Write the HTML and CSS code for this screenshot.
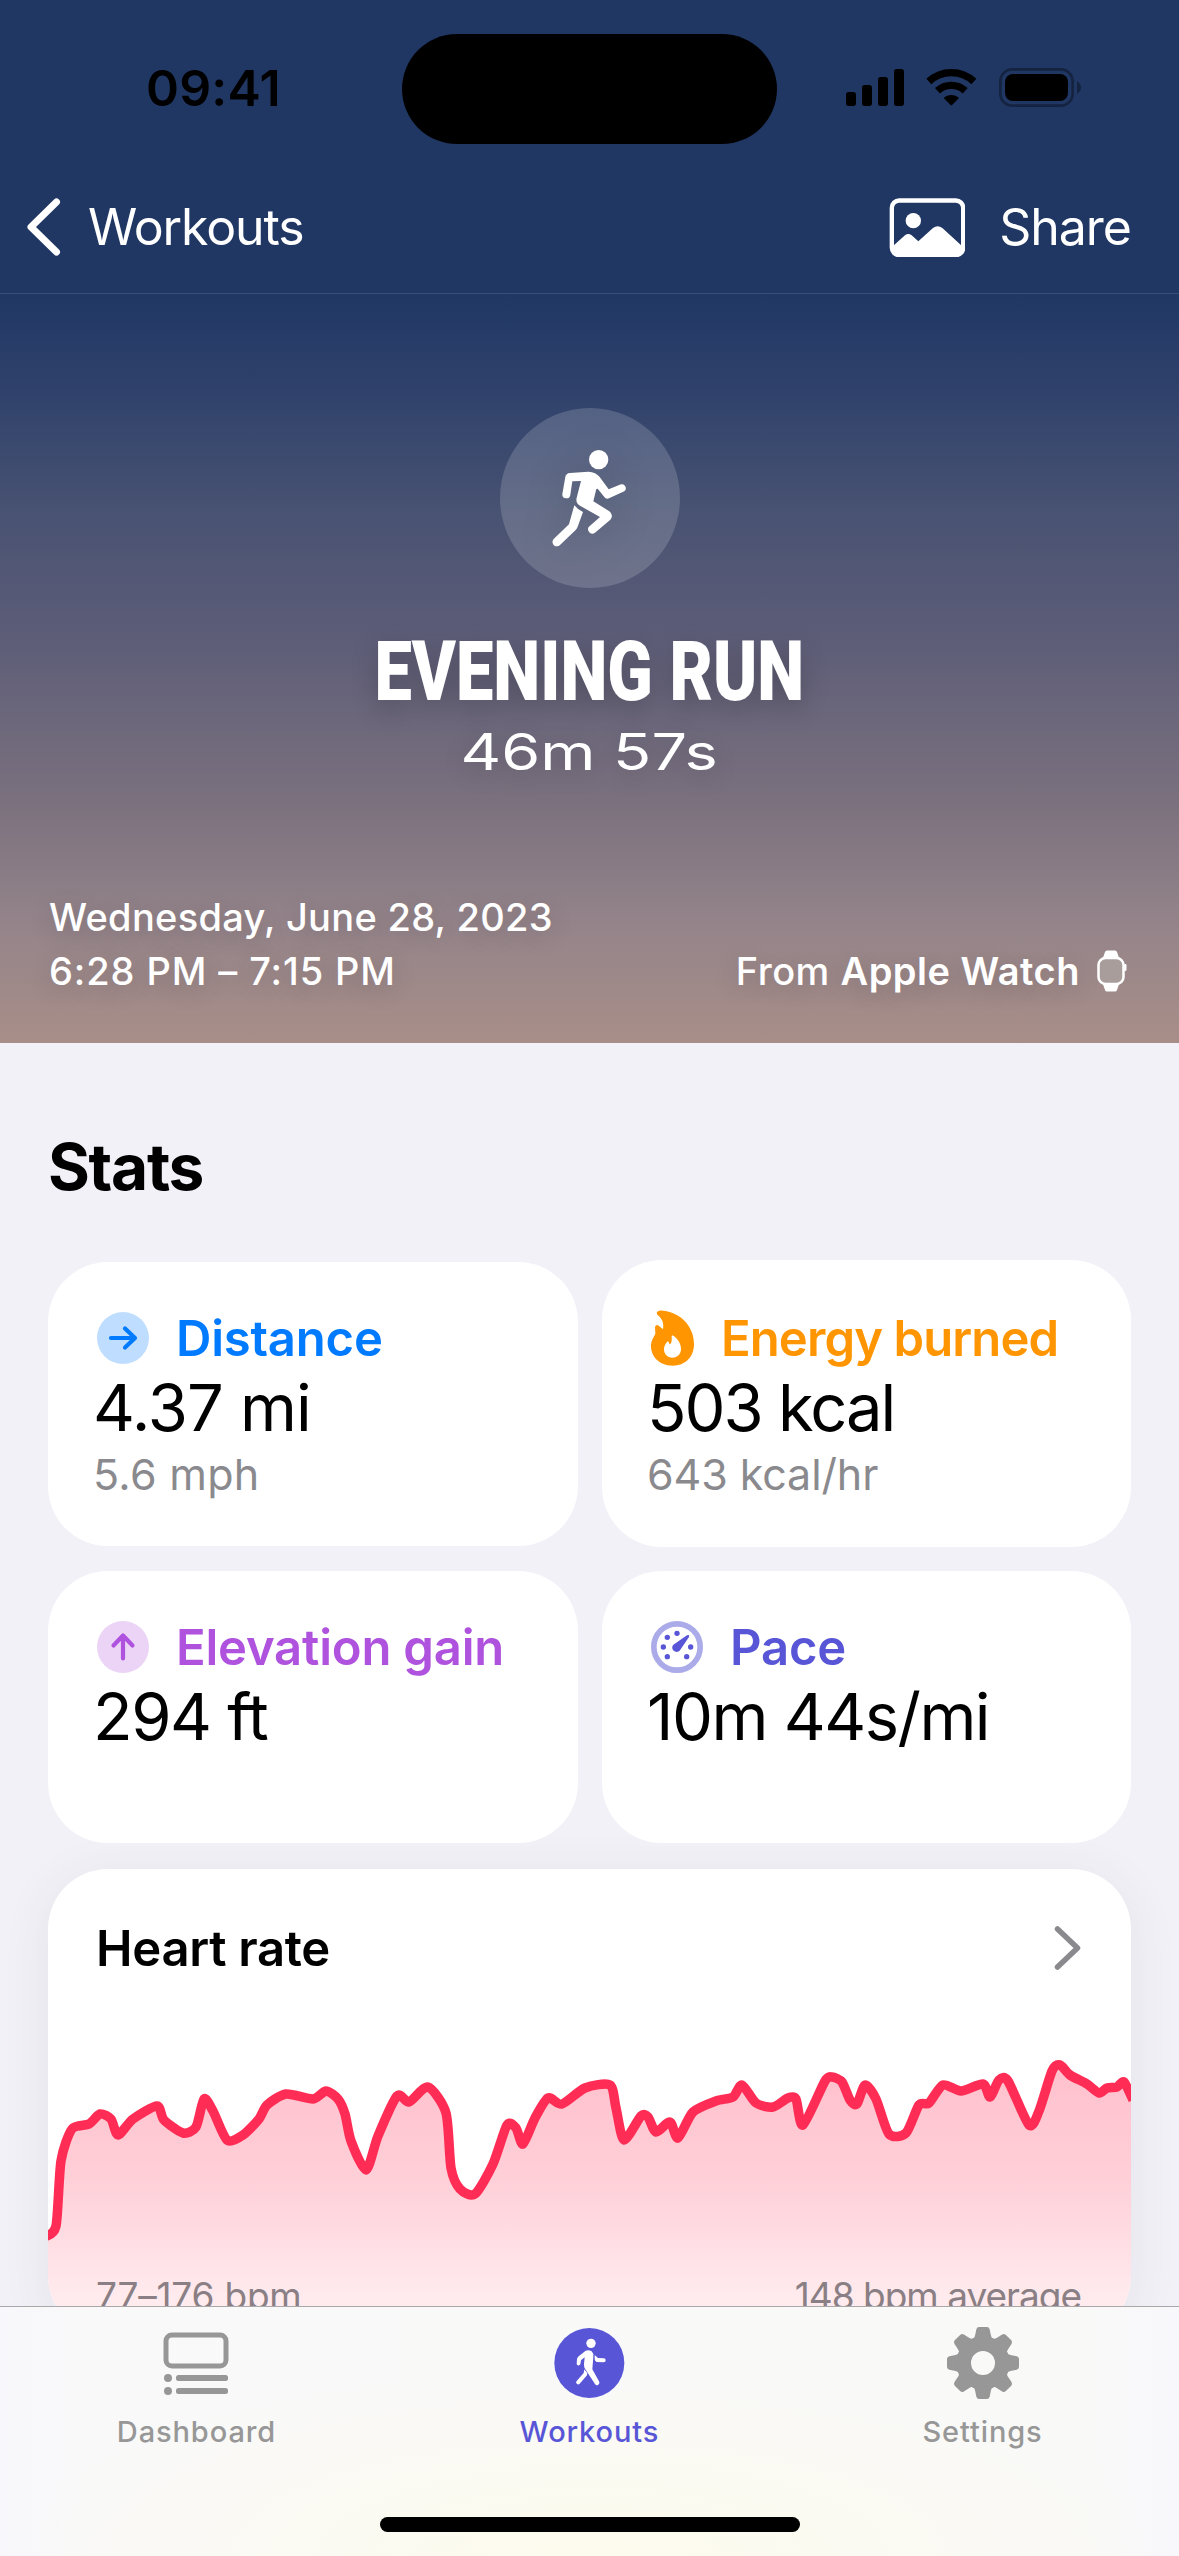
FILE: index.html
```html
<!DOCTYPE html>
<html lang="en">
<head>
    <meta charset="UTF-8">
    <meta name="viewport" content="width=device-width, initial-scale=1.0">
    <title>Evening Run</title>
    <link rel="stylesheet" href="styles.css">
</head>
<body>
    <div class="content">
        <header class="header">
            <div class="status-bar">
                <div class="clock">09:41</div>
                <div class="island"></div>
                <div class="status-icons">
                    <svg width="236" height="40" viewBox="0 0 708 120">
                        <g transform="translate(-48 -54)">
                            <rect x="48" y="126" width="30" height="42" rx="8"/>
                            <rect x="96" y="105" width="30" height="63" rx="8"/>
                            <rect x="144" y="81" width="30" height="87" rx="8"/>
                            <rect x="192" y="57" width="30" height="111" rx="8"/>
                            <path d="M296.500 94.600A99 99 0 0 1 431.500 94.600M322.400 122.400A61 61 0 0 1 405.600 122.400" fill="none" stroke="#000" stroke-width="22"/>
                            <path d="M364 167L341 144A33 33 0 0 1 387 144Z"/>
                            <rect x="511" y="58" width="217" height="109" rx="36" fill="none" stroke="#14233f" stroke-width="8"/>
                            <rect x="525" y="72" width="189" height="81" rx="24"/>
                            <path d="M741 94Q753 101 753 112.500Q753 124 741 131Z" fill="#14233f"/>
                        </g>
                    </svg>
                </div>
            </div>
            <nav class="nav-bar">
                <div class="nav-back">
                    <svg width="34" height="58" viewBox="0 0 34 58"><path d="M29.500 4L4 29L29.500 54" fill="none" stroke="#fff" stroke-width="7" stroke-linecap="round" stroke-linejoin="round"/></svg>
                    <span>Workouts</span>
                </div>
                <div class="nav-share">
                    <svg width="76" height="60" viewBox="178 440 228 180">
                        <rect x="186.500" y="450.500" width="214" height="164" rx="22" fill="none" stroke="#fff" stroke-width="13"/>
                        <circle cx="251" cy="511" r="23" fill="#fff"/>
                        <path d="M190 587L226 555Q236 547 246 555L266 573L310 533Q324 523 338 533L397 587V612H190Z" fill="#fff"/>
                    </svg>
                    <span>Share</span>
                </div>
            </nav>
        </header>

        <section class="hero">
            <div class="run-badge">
                <svg class="run-icon" width="75" height="97" viewBox="636 207 225 291" fill="#fff">
                    <circle cx="776" cy="236" r="29"/>
                    <path d="M676 288Q678 277 690 276L745 272Q768 273 779 288L806 325L843 310A12 12 0 0 1 853 331L807 352Q798 355 793 348L773 323L769 324L760 361L808 391Q822 402 811 416L765 455A13 13 0 0 1 746 438L780 408L720 374Q706 366 710 350L723 300L697 301L691 341A12 12 0 0 1 667 339Z"/>
                    <path d="M703 373Q712 385 729 393L713 437Q711 443 707 447L660 492A13 13 0 0 1 641 474L687 430Z"/>
                </svg>
            </div>
            <h1>EVENING RUN</h1>
            <div class="duration">46m 57s</div>
            <div class="hero-meta">
                <div>
                    <div class="date">Wednesday, June 28, 2023</div>
                    <div class="hours">6:28 PM – 7:15 PM</div>
                </div>
                <div class="source">
                    <span>From <b>Apple Watch</b></span>
                    <svg width="30" height="42" viewBox="0 0 30 42">
                        <path d="M5.500 9L8 2Q8.500 .5 10 .5H18Q19.500 .5 20 2L22.500 9ZM5.500 33L8 40Q8.500 41.500 10 41.500H18Q19.500 41.500 20 40L22.500 33Z" fill="#fff"/>
                        <rect x="1.500" y="8" width="25" height="26" rx="7" fill="#a99d9c" stroke="#fff" stroke-width="2.500"/>
                        <rect x="27" y="14" width="2.500" height="7" rx="1.200" fill="#fff"/>
                    </svg>
                </div>
            </div>
        </section>

        <section class="stats">
            <h2>Stats</h2>
            <div class="stat-grid">
                <div class="card distance">
                    <div class="card-title">
                        <svg width="52" height="52" viewBox="0 0 52 52">
                            <circle cx="26" cy="26" r="26" fill="#bfdeff"/>
                            <path d="M14 26H37M28 16.500L38 26L28 35.500" fill="none" stroke="#007aff" stroke-width="4.200" stroke-linecap="round" stroke-linejoin="round"/>
                        </svg>
                        <span>Distance</span>
                    </div>
                    <div class="value">4.37 mi</div>
                    <div class="sub">5.6 mph</div>
                </div>
                <div class="card energy">
                    <div class="card-title">
                        <svg width="43" height="56" viewBox="33 28 129 168">
                            <path fill="#ff9500" fill-rule="evenodd" d="M52 42Q47 33 57 30Q65 28 80 32C128 42 162 82 162 130C162 170 135 195 98 195C58 195 33 168 33 137C33 120 40 111 46 100L45 80Q48 68 57 76L69 86C72 66 67 54 52 42ZM97 104C112 112 123 128 123 145C123 160 112 171 97 171C82 171 72 160 72 146C72 135 77 128 84 121L89 131Q97 128 95 106Z"/>
                        </svg>
                        <span>Energy burned</span>
                    </div>
                    <div class="value">503 kcal</div>
                    <div class="sub">643 kcal/hr</div>
                </div>
                <div class="card elevation">
                    <div class="card-title">
                        <svg width="52" height="52" viewBox="0 0 52 52">
                            <circle cx="26" cy="26" r="26" fill="#ebd4f6"/>
                            <path d="M26 37.500V15M16.500 24.500L26 14.500L35.500 24.500" fill="none" stroke="#af52de" stroke-width="4.200" stroke-linecap="round" stroke-linejoin="round"/>
                        </svg>
                        <span>Elevation gain</span>
                    </div>
                    <div class="value">294 ft</div>
                </div>
                <div class="card pace">
                    <div class="card-title">
                        <svg width="52" height="52" viewBox="33 963 156 156" fill="#5856d6">
                            <circle cx="111" cy="1041" r="69.500" fill="none" stroke="#ababea" stroke-width="17"/>
                            <circle cx="111" cy="1000" r="8"/>
                            <circle cx="82" cy="1012" r="8"/>
                            <circle cx="70" cy="1041" r="8"/>
                            <circle cx="82" cy="1070" r="8"/>
                            <circle cx="152" cy="1041" r="8"/>
                            <circle cx="140" cy="1070" r="8"/>
                            <path d="M141 1006Q150 1002 147 1011L121 1049A13 13 0 1 1 100 1034Z"/>
                        </svg>
                        <span>Pace</span>
                    </div>
                    <div class="value">10m 44s/mi</div>
                </div>
            </div>

            <div class="heart-card">
                <div class="heart-head">
                    <span>Heart rate</span>
                    <svg width="27" height="46" viewBox="0 0 27 46"><path d="M3.500 4L23.500 23L3.500 42" fill="none" stroke="#8a8a8e" stroke-width="5.500" stroke-linecap="round" stroke-linejoin="round"/></svg>
                </div>
                <svg class="chart" width="1083" height="467" viewBox="1 -1 1083 467">
                    <defs>
                        <linearGradient id="fade" gradientUnits="userSpaceOnUse" x1="0" y1="194" x2="0" y2="480">
                            <stop offset="0" stop-color="#ffc0cc"/>
                            <stop offset=".4" stop-color="#ffcfd8"/>
                            <stop offset=".82" stop-color="#ffebee"/>
                            <stop offset="1" stop-color="#ffeff2"/>
                        </linearGradient>
                    </defs>
                    <path id="area" fill="url(#fade)"/>
                    <path id="line" fill="none" stroke="#ff2d55" stroke-width="9.500" stroke-linejoin="round"/>
                </svg>
                <div class="heart-foot">
                    <span class="bpm-range">77–176 bpm</span>
                    <span class="bpm-avg">148 bpm average</span>
                </div>
            </div>
        </section>
    </div>

    <footer class="tab-bar">
        <div class="tabs">
            <div class="tab">
                <svg width="72" height="72" viewBox="0 0 72 72" fill="#979797">
                    <rect x="5" y="8" width="60" height="31" rx="6" fill="none" stroke="#979797" stroke-width="5"/>
                    <circle cx="7" cy="51" r="4"/>
                    <circle cx="7" cy="64" r="4"/>
                    <rect x="15" y="48" width="52" height="6" rx="2.500"/>
                    <rect x="15" y="61" width="52" height="6" rx="2.500"/>
                </svg>
                <span>Dashboard</span>
            </div>
            <div class="tab active">
                <svg width="72" height="72" viewBox="41 51 216 216">
                    <circle cx="147" cy="159" r="105" fill="#5856d6"/>
                    <g fill="#fff">
                        <circle cx="152" cy="100" r="14"/>
                        <path d="M136 122Q145 118 154 124Q160 130 159 140L156 178L176 214A7 7 0 0 1 164 222L135 178Q130 170 131 162L133 142L122 151L120 163A6 6 0 0 1 109 162L110 147Q111 143 115 139Z"/>
                        <path d="M163 135L173 144L190 145A6 6 0 0 1 190 157L169 156Q163 153 163 148Z"/>
                        <path d="M132 178L141 190L140 196L118 221A6 6 0 0 1 109 213L130 189Z"/>
                    </g>
                </svg>
                <span>Workouts</span>
            </div>
            <div class="tab">
                <svg width="72" height="72" viewBox="-108 -108 216 216" fill="#979797">
                    <circle r="58" fill="none" stroke="#979797" stroke-width="44"/>
                    <path id="tooth" d="M-30 -70Q-24 -78 -23 -86L-20 -101Q-18 -108 -12 -108H12Q18 -108 20 -101L23 -86Q24 -78 30 -70Z"/>
                    <use href="#tooth" transform="rotate(45)"/>
                    <use href="#tooth" transform="rotate(90)"/>
                    <use href="#tooth" transform="rotate(135)"/>
                    <use href="#tooth" transform="rotate(180)"/>
                    <use href="#tooth" transform="rotate(225)"/>
                    <use href="#tooth" transform="rotate(270)"/>
                    <use href="#tooth" transform="rotate(315)"/>
                </svg>
                <span>Settings</span>
            </div>
        </div>
        <div class="home-indicator"></div>
    </footer>

    <script>
        // Heart rate samples as [x, y]
        const points = [
            [-2, 367], [9, 356], [14, 291], [25, 259], [42, 254], [53, 244], [64, 249], [71, 265],
            [86, 249], [110, 236], [117, 250], [136, 263], [149, 257], [157, 229], [166, 241],
            [180, 270], [196, 265], [212, 249], [220, 235], [239, 224], [266, 229], [279, 221],
            [291, 229], [298, 244], [304, 271], [319, 300], [331, 266], [350, 226], [362, 232],
            [381, 217], [399, 243], [404, 298], [413, 319], [428, 324], [446, 294], [460, 255],
            [469, 258], [476, 274], [488, 248], [501, 228], [515, 234], [538, 218], [563, 215],
            [569, 238], [577, 270], [594, 246], [601, 247], [609, 262], [623, 252], [631, 268],
            [646, 242], [669, 231], [686, 227], [695, 215], [709, 233], [726, 237], [741, 228],
            [749, 229], [756, 255], [778, 211], [785, 207], [795, 212], [803, 230], [810, 234],
            [818, 215], [829, 229], [842, 264], [859, 263], [872, 235], [882, 233], [896, 215],
            [914, 221], [936, 214], [943, 227], [952, 210], [961, 211], [982, 255], [992, 241],
            [1005, 201], [1013, 195], [1023, 205], [1040, 214], [1052, 223], [1060, 218],
            [1070, 217], [1077, 212], [1086, 230]
        ];

        function smoothPath(pts) {
            let d = `M${pts[0][0]} ${pts[0][1]}`;
            for (let i = 0; i < pts.length - 1; i++) {
                const a = pts[i - 1] || pts[i];
                const b = pts[i];
                const c = pts[i + 1];
                const e = pts[i + 2] || c;
                d += `C${b[0] + (c[0] - a[0]) / 8} ${b[1] + (c[1] - a[1]) / 8} ${c[0] - (e[0] - b[0]) / 8} ${c[1] - (e[1] - b[1]) / 8} ${c[0]} ${c[1]}`;
            }
            return d;
        }

        const line = smoothPath(points);
        document.getElementById('line').setAttribute('d', line);
        document.getElementById('area').setAttribute('d', line + 'V520H-2Z');
    </script>
</body>
</html>
```
FILE: styles.css
```css
* {
    box-sizing: border-box;
}

body {
    font-family: Inter, "Liberation Sans", sans-serif;
    background-color: #f2f1f7;
    color: #000;
    margin: 0;
    width: 1179px;
    height: 2556px;
    display: flex;
    flex-direction: column;
    overflow: hidden;
}

svg {
    display: block;
    flex: none;
}

.content {
    flex: 1;
    min-height: 0;
    overflow: hidden;
}

/* Status and navigation bars */
.header {
    background-color: #203764;
    border-bottom: 1px solid #3a4f78;
    height: 294px;
    color: #fff;
}

.status-bar {
    display: grid;
    grid-template-columns: 402px 375px 402px;
    align-items: center;
    height: 162px;
    padding-top: 16px;
    color: #000;
}

.clock {
    padding-left: 146px;
    padding-bottom: 3px;
    font-size: 50px;
    font-weight: 600;
    letter-spacing: 0.2px;
    white-space: nowrap;
}

.island {
    height: 110px;
    border-radius: 55px;
    background-color: #000;
}

.status-icons {
    padding-left: 69px;
    padding-bottom: 2px;
}

.nav-bar {
    display: flex;
    justify-content: space-between;
    align-items: center;
    height: 131px;
    padding: 0 48px 2px 27px;
    font-size: 50px;
    line-height: 60px;
}

.nav-back,
.nav-share {
    display: flex;
    align-items: center;
}

.nav-back {
    gap: 27px;
    letter-spacing: -1.1px;
}

.nav-share {
    gap: 34px;
    letter-spacing: -1px;
}

/* Hero */
.hero {
    height: 749px;
    padding: 114px 48px 45px;
    display: flex;
    flex-direction: column;
    align-items: center;
    color: #fff;
    background: linear-gradient(#203764 0%, #2e416b 12%, #485272 29%, #5d5d78 46%, #7b717e 68%, #94848a 84%, #a88e88 100%);
}

.run-badge {
    width: 180px;
    height: 180px;
    border-radius: 50%;
    background-color: rgba(255, 255, 255, 0.16);
    display: flex;
    align-items: center;
    justify-content: center;
}

.run-icon {
    filter: drop-shadow(0 6px 20px rgba(0, 0, 0, 0.15));
}

h1 {
    margin: 39px 0 5px;
    font-family: Roboto, "Liberation Sans", sans-serif;
    font-size: 84px;
    font-weight: 900;
    line-height: 90px;
    white-space: nowrap;
    transform: scaleX(0.795);
    text-shadow: 0 8px 30px rgba(0, 0, 0, 0.22);
}

.duration {
    font-size: 50px;
    line-height: 60px;
    transform: scaleX(1.26);
    text-shadow: 0 6px 24px rgba(0, 0, 0, 0.18);
}

.hero-meta {
    margin-top: auto;
    align-self: stretch;
    display: flex;
    justify-content: space-between;
    align-items: flex-end;
    padding-left: 1px;
    font-size: 38px;
    font-weight: 500;
    line-height: 54px;
    text-shadow: 0 6px 24px rgba(0, 0, 0, 0.18);
}

.date {
    letter-spacing: 0.3px;
}

.hours {
    letter-spacing: 0.9px;
}

.source {
    display: flex;
    align-items: center;
    gap: 17px;
    padding-right: 4px;
    letter-spacing: 0.5px;
}

.source b {
    font-weight: 600;
}

/* Stats */
.stats {
    padding: 84px 48px 0;
}

h2 {
    margin: 0 0 53px;
    font-size: 64px;
    line-height: 80px;
    letter-spacing: -1.3px;
}

.stat-grid {
    display: grid;
    grid-template-columns: 530px 529px;
    grid-template-rows: 287px 272px;
    gap: 24px;
}

.card {
    background-color: #fff;
    border-radius: 60px;
    padding: 49px 48px 0 45px;
}

.distance {
    margin: 2px 0 1px;
}

.energy {
    padding-top: 51px;
}

.card-title {
    display: flex;
    align-items: center;
    gap: 27px;
    height: 54px;
    padding-left: 4px;
    font-size: 49px;
    font-weight: 600;
    letter-spacing: -0.2px;
    white-space: nowrap;
}

.distance .card-title {
    color: #007aff;
}

.energy .card-title {
    color: #ff9500;
    letter-spacing: -0.9px;
}

.elevation .card-title {
    color: #af52de;
}

.pace .card-title {
    color: #5856d6;
}

.value {
    margin-top: 4px;
    font-size: 65px;
    line-height: 78px;
    letter-spacing: -1.5px;
    white-space: nowrap;
}

.distance .value {
    letter-spacing: -1px;
}

.energy .value {
    letter-spacing: -2px;
}

.sub {
    margin-top: -1px;
    font-size: 43px;
    line-height: 56px;
    letter-spacing: 0.3px;
    color: #8a8a8e;
}

.energy .sub {
    letter-spacing: -0.1px;
}

.heart-card {
    display: grid;
    height: 467px;
    margin-top: 26px;
    background-color: #fff;
    border-radius: 60px;
    overflow: hidden;
    box-shadow: 0 8px 50px rgba(60, 60, 90, 0.08);
}

/* Title, chart and legend share one grid cell */
.heart-card > * {
    grid-area: 1 / 1;
}

.heart-head {
    display: flex;
    justify-content: space-between;
    align-items: center;
    align-self: start;
    height: 54px;
    margin-top: 52px;
    padding: 0 50px 0 48px;
    font-size: 49px;
    font-weight: 600;
    letter-spacing: -0.3px;
}

.heart-foot {
    align-self: start;
    display: flex;
    justify-content: space-between;
    margin-top: 402px;
    padding: 0 50px 0 48px;
    font-size: 37px;
    line-height: 50px;
    color: #8a7f84;
}

.bpm-range {
    letter-spacing: -0.2px;
}

.bpm-avg {
    letter-spacing: -1px;
}

/* Tab bar */
.tab-bar {
    height: 250px;
    border-top: 1px solid #a9a7aa;
    display: flex;
    flex-direction: column;
    align-items: center;
    justify-content: space-between;
    padding: 20px 0 24px;
    background: radial-gradient(ellipse 50% 75% at 50% 100%, #fdfbed, rgba(250, 250, 246, 0) 100%), linear-gradient(90deg, #f8f8fc, #f9f9f9 8%, #f9f9f8 92%, #f8f8fc);
}

.tabs {
    display: flex;
    align-self: stretch;
}

.tab {
    flex: 1;
    display: flex;
    flex-direction: column;
    align-items: center;
    gap: 13px;
    font-size: 29px;
    font-weight: 500;
    line-height: 40px;
    letter-spacing: 0.9px;
    color: #979797;
}

.tab.active {
    color: #5856d6;
}

.home-indicator {
    width: 420px;
    height: 15px;
    border-radius: 8px;
    background-color: #000;
}
```
